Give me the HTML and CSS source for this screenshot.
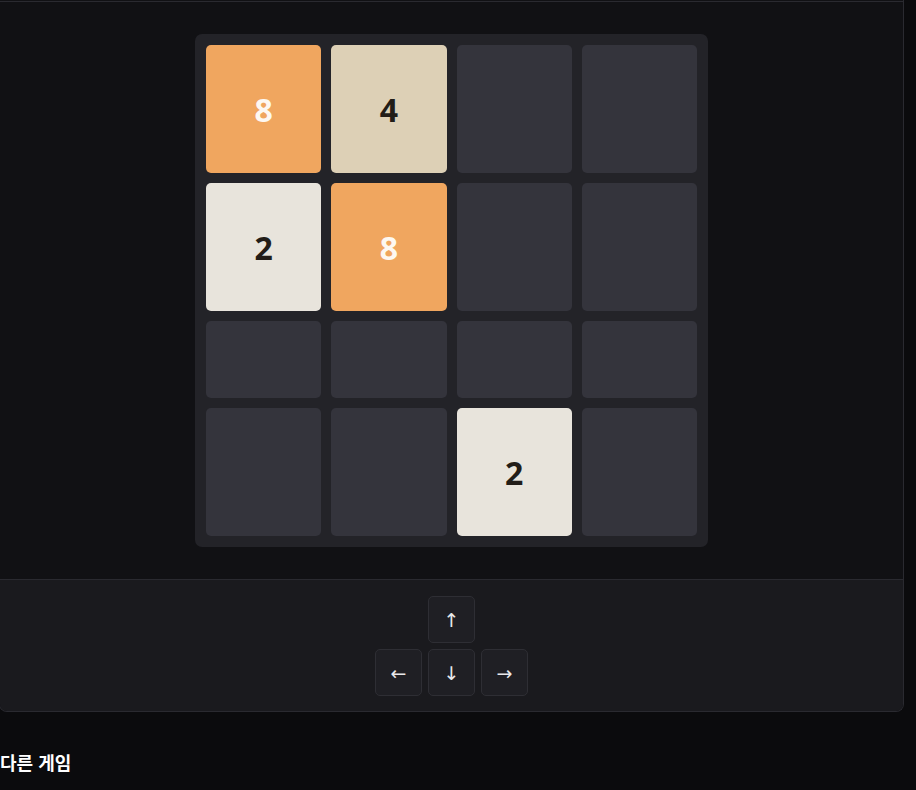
FILE: index.html
```html
<!DOCTYPE html>
<html lang="ko">
<head>
    <meta charset="UTF-8">
    <meta name="viewport" content="width=device-width, initial-scale=1.0">
    <title>2048</title>
    <link rel="stylesheet" href="styles.css">
</head>
<body>
    <div class="game-card">
        <div class="stage">
            <div class="board" id="board">
                <div class="tile t8">8</div>
                <div class="tile t4">4</div>
                <div class="tile"></div>
                <div class="tile"></div>

                <div class="tile t2">2</div>
                <div class="tile t8">8</div>
                <div class="tile"></div>
                <div class="tile"></div>

                <div class="tile"></div>
                <div class="tile"></div>
                <div class="tile"></div>
                <div class="tile"></div>

                <div class="tile"></div>
                <div class="tile"></div>
                <div class="tile t2">2</div>
                <div class="tile"></div>
            </div>
        </div>
        <div class="controls">
            <div class="key-row">
                <button class="key" data-dir="up">↑</button>
            </div>
            <div class="key-row">
                <button class="key" data-dir="left">←</button>
                <button class="key" data-dir="down">↓</button>
                <button class="key" data-dir="right">→</button>
            </div>
        </div>
    </div>

    <h2 class="more-title">다른 게임</h2>
</body>
</html>
```

FILE: styles.css
```css
/* 기본 레이아웃 */
body {
    margin: 0;
    background-color: #0b0b0d;
    color: #f2f2f2;
    font-family: "Noto Sans", "Noto Sans CJK KR", sans-serif;
}

.game-card {
    width: 905px;
    margin-left: -1px;
    box-sizing: border-box;
    background-color: #111114;
    border: 1px solid #2a2a30;
    border-top: none;
    border-radius: 0 0 8px 8px;
    overflow: hidden;
}

.stage {
    margin-top: 1px;
    border-top: 1px solid #2a2a30;
    padding: 32px 0 32px;
    display: flex;
    justify-content: center;
}

/* 보드: 빈 줄은 줄어들고 숫자가 있는 줄은 커진다 */
.board {
    width: 513px;
    height: 513px;
    box-sizing: border-box;
    padding: 11px;
    background-color: #232328;
    border-radius: 7px;
    display: grid;
    grid-template-columns: repeat(4, 1fr);
    gap: 10px;
}

.tile {
    background-color: #34343c;
    border-radius: 5px;
    display: flex;
    align-items: center;
    justify-content: center;
    font-size: 32px;
    font-weight: 700;
    line-height: 51px;
}

.tile:empty {
    line-height: 0;
}

.t2 {
    background-color: #e8e4dc;
    color: #221d18;
}

.t4 {
    background-color: #ddd0b6;
    color: #221d18;
}

.t8 {
    background-color: #f0a65f;
    color: #fdf8f2;
}

/* 방향키 */
.controls {
    border-top: 1px solid #2a2a30;
    background-color: #1a1a1e;
    padding: 16px 0 15px;
    display: flex;
    flex-direction: column;
    align-items: center;
    gap: 6px;
}

.key-row {
    display: flex;
    gap: 6px;
}

.key {
    width: 47px;
    height: 47px;
    padding: 0;
    background-color: #1f1f24;
    border: 1px solid #2e2e34;
    border-radius: 5px;
    color: #e8e8ea;
    font-family: "DejaVu Sans", sans-serif;
    font-size: 19px;
    cursor: pointer;
}

.key:hover {
    background-color: #26262c;
}

.more-title {
    margin: 37px 0 0;
    font-family: "Noto Sans CJK KR", sans-serif;
    font-size: 18px;
    font-weight: 700;
    color: #ffffff;
}
```
